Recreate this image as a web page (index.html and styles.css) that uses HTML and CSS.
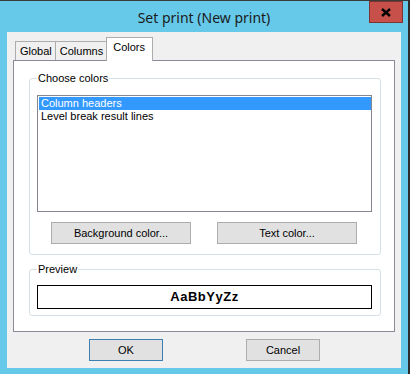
FILE: index.html
```html
<!DOCTYPE html>
<html lang="en">
	<head>
		<meta charset="utf-8">
		<title>Set print (New print)</title>
		<link rel="stylesheet" href="styles.css">
	</head>
	<body>

		<!--
			window frame with caption
		-->

		<div class="window">
			<div class="titlebar">
				<span class="title">Set print (New print)</span>
				<div class="close">
					<svg width="10" height="9" viewBox="0 0 10 9">
						<path d="M1 1 L9 8 M9 1 L1 8" stroke="#000" stroke-width="2.4" fill="none"/>
					</svg>
				</div>
			</div>

			<div class="client">

				<!--
					tab strip
				-->

				<div class="tabs">
					<div class="tab">Global</div>
					<div class="tab">Columns</div>
					<div class="tab active">Colors</div>
				</div>

				<div class="panel">

					<fieldset class="group choose">
						<legend>Choose colors</legend>
						<ul class="list">
							<li class="selected">Column headers</li>
							<li>Level break result lines</li>
						</ul>
						<div class="row">
							<button class="btn wide">Background color...</button>
							<button class="btn wide">Text color...</button>
						</div>
					</fieldset>

					<fieldset class="group preview">
						<legend>Preview</legend>
						<div class="sample">AaBbYyZz</div>
					</fieldset>

				</div>

				<!--
					dialog buttons
				-->

				<div class="actions">
					<button class="btn default">OK</button>
					<button class="btn">Cancel</button>
				</div>

			</div>
		</div>

	</body>
</html>
```

FILE: styles.css
```css
/*
	page and window frame
*/

body {
	margin: 0;
	width: 410px;
	height: 374px;
	background-color: #66c9ea;
	font-family: "Liberation Sans", Arial, sans-serif;
	font-size: 11px;
	color: #000;
	overflow: hidden;
}

.window {
	height: 374px;
	border-right: 2px solid #2c2c2c;
	border-top: 1px solid #3a3a3a;
	box-sizing: border-box;
}

/*
	caption bar
*/

.titlebar {
	position: relative;
	height: 31px;
	display: flex;
	align-items: center;
	justify-content: center;
}

.title {
	font-family: "Noto Sans", sans-serif;
	font-size: 14px;
	color: #1b1b1b;
	margin-top: 1px;
}

.close {
	position: absolute;
	left: 369px;
	top: 0;
	width: 32px;
	height: 20px;
	background-color: #c7504b;
	border: 1px solid #7f3431;
	display: flex;
	align-items: center;
	justify-content: center;
}

/*
	client area
*/

.client {
	margin: 0 7px 0 7px;
	height: 336px;
	background-color: #f0f0f0;
	padding: 6px 6px 0 6px;
	box-sizing: border-box;
}

.tabs {
	display: flex;
	align-items: flex-end;
	padding-left: 2px;
	height: 22px;
	position: relative;
	z-index: 1;
}

.tab {
	height: 18px;
	border: 1px solid #acacac;
	border-bottom: none;
	border-right: none;
	background-color: #f0f0f0;
	padding: 0 3px 0 4px;
	line-height: 18px;
	margin-bottom: 0;
}

.tab.active {
	height: 23px;
	line-height: 18px;
	background-color: #fff;
	border: 1px solid #acacac;
	border-bottom: none;
	padding: 0 7px 0 6px;
	margin-bottom: -1px;
}

.panel {
	height: 272px;
	background-color: #fff;
	border: 1px solid #898c95;
	box-sizing: border-box;
	padding: 10px 12px 0 15px;
}

/*
	group boxes
*/

.group {
	margin: 0;
	border: 1px solid #d5dfe5;
	border-radius: 3px;
	padding: 0 0 0 7px;
	width: 352px;
	box-sizing: border-box;
}

.group legend {
	padding: 0 1px;
	margin-left: 0;
	line-height: 15px;
	color: #000;
}

.choose {
	height: 184px;
}

.preview {
	margin-top: 7px;
	height: 54px;
}

.list {
	list-style: none;
	margin: 9px 0 0 0;
	padding: 1px 0 0 1px;
	width: 335px;
	height: 117px;
	border: 1px solid #828790;
	box-sizing: border-box;
}

.list li {
	height: 13px;
	line-height: 13px;
	padding-left: 2px;
}

.list li.selected {
	background-color: #3399ff;
	color: #fff;
}

.row {
	display: flex;
	gap: 26px;
	padding-left: 14px;
	margin-top: 10px;
}

/*
	push buttons
*/

.btn {
	font-family: "Liberation Sans", Arial, sans-serif;
	font-size: 11px;
	color: #000;
	background-color: #e1e1e1;
	border: 1px solid #adadad;
	height: 22px;
	width: 74px;
	padding: 0;
}

.btn.wide {
	width: 140px;
}

.btn.default {
	border-color: #3c7fb1;
}

.sample {
	margin-top: 8px;
	width: 335px;
	height: 24px;
	border: 1px solid #000;
	box-sizing: border-box;
	text-align: center;
	font-weight: bold;
	font-size: 13px;
	letter-spacing: 0.5px;
	line-height: 22px;
}

.actions {
	display: flex;
	gap: 83px;
	padding-left: 76px;
	margin-top: 7px;
}
```
